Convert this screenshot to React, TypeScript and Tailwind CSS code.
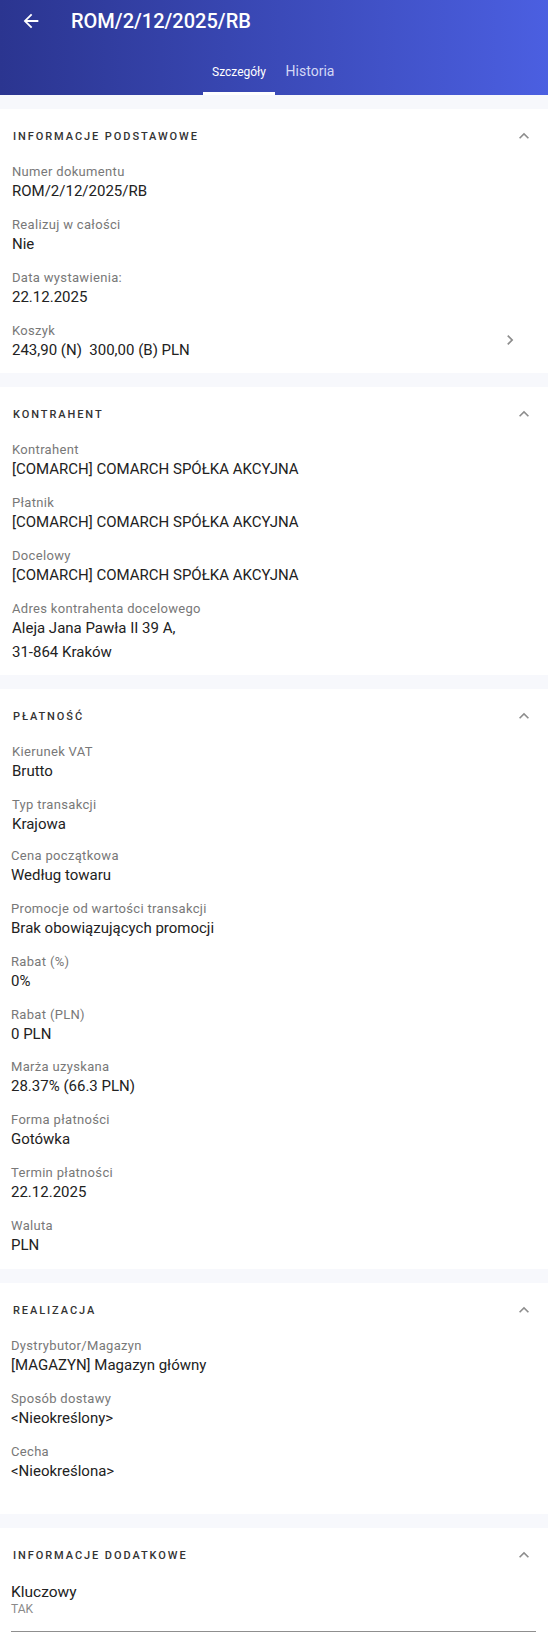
import React from "react";

const ArrowBack = () => (
  <svg width="22" height="22" viewBox="0 0 24 24" fill="white">
    <path d="M20 11H7.83l5.59-5.59L12 4l-8 8 8 8 1.41-1.41L7.83 13H20v-2z" />
  </svg>
);

const ExpandLess = () => (
  <svg width="20" height="20" viewBox="0 0 24 24" fill="#8d8d8d">
    <path d="M12 8l-6 6 1.41 1.41L12 10.83l4.59 4.58L18 14z" />
  </svg>
);

const ChevronRight = () => (
  <svg width="20" height="20" viewBox="0 0 24 24" fill="#8d8d8d">
    <path d="M10 6L8.59 7.41 13.17 12l-4.58 4.59L10 18l6-6z" />
  </svg>
);

function Section({
  title,
  children,
  pb,
}: {
  title: string;
  children: React.ReactNode;
  pb: string;
}) {
  return (
    <section className={`bg-white ${pb}`}>
      <div className="h-[55px] pb-[1px] flex items-center justify-between pl-[13px] pr-[14px]">
        <h2 className="text-[11px] font-medium tracking-[0.175em] text-[#333333] leading-none">
          {title}
        </h2>
        <ExpandLess />
      </div>
      {children}
    </section>
  );
}

function Field({
  label,
  value,
  cls = "",
}: {
  label: string;
  value: React.ReactNode;
  cls?: string;
}) {
  return (
    <div className={cls}>
      <div className="text-[13px] leading-[15px] text-[#787878] tracking-[0.025em]">{label}</div>
      <div className="text-[15px] leading-6 text-[#222222]">{value}</div>
    </div>
  );
}

export default function App() {
  return (
    <div className="font-[Roboto,sans-serif] bg-[#f7f8fc] w-[548px]">
      <header className="h-[95px] bg-gradient-to-r from-[#2b3590] to-[#4b5fe1] flex flex-col">
        <div className="h-[42px] flex items-center">
          <div className="w-[71px] pl-[20px] flex items-center">
            <ArrowBack />
          </div>
          <h1 className="text-[20px] font-medium text-white leading-none">ROM/2/12/2025/RB</h1>
        </div>
        <nav className="mt-auto flex justify-center">
          <div className="w-[72px] h-[53px] flex flex-col items-center">
            <span className="mt-auto mb-[14px] text-[12px] text-white leading-none">Szczegóły</span>
            <div className="w-full h-[3px] bg-white" />
          </div>
          <div className="w-[70px] h-[53px] flex flex-col items-center">
            <span className="mt-auto mb-[17px] text-[14px] text-[#d3d8f5] leading-none">Historia</span>
          </div>
        </nav>
      </header>

      <div className="flex flex-col gap-[14px] pt-[14px]">
        <Section title="INFORMACJE PODSTAWOWE" pb="pb-[11px]">
          <div className="flex flex-col gap-[14px] px-3">
            <Field label="Numer dokumentu" value="ROM/2/12/2025/RB" />
            <Field label="Realizuj w całości" value="Nie" />
            <Field label="Data wystawienia:" value="22.12.2025" />
            <div className="flex items-center justify-between pr-[16px]">
              <Field label="Koszyk" value="243,90 (N)  300,00 (B) PLN" cls="whitespace-pre" />
              <div className="mb-[6px]">
                <ChevronRight />
              </div>
            </div>
          </div>
        </Section>

        <Section title="KONTRAHENT" pb="pb-[11px]">
          <div className="flex flex-col gap-[14px] px-3">
            <Field label="Kontrahent" value="[COMARCH] COMARCH SPÓŁKA AKCYJNA" />
            <Field label="Płatnik" value="[COMARCH] COMARCH SPÓŁKA AKCYJNA" />
            <Field label="Docelowy" value="[COMARCH] COMARCH SPÓŁKA AKCYJNA" />
            <Field
              label="Adres kontrahenta docelowego"
              value={
                <>
                  <div>Aleja Jana Pawła II 39 A,</div>
                  <div>31-864 Kraków</div>
                </>
              }
            />
          </div>
        </Section>

        <Section title="PŁATNOŚĆ" pb="pb-[12px]">
          <div className="flex flex-col">
            <Field label="Kierunek VAT" value="Brutto" cls="pl-3" />
            <Field label="Typ transakcji" value="Krajowa" cls="pl-3 mt-[14px]" />
            <Field label="Cena początkowa" value="Według towaru" cls="pl-[11px] mt-[12px]" />
            <Field label="Promocje od wartości transakcji" value="Brak obowiązujących promocji" cls="pl-[11px] mt-[14px]" />
            <Field label="Rabat (%)" value="0%" cls="pl-[11px] mt-[14px]" />
            <Field label="Rabat (PLN)" value="0 PLN" cls="pl-[11px] mt-[14px]" />
            <Field label="Marża uzyskana" value="28.37% (66.3 PLN)" cls="pl-[11px] mt-[13px]" />
            <Field label="Forma płatności" value="Gotówka" cls="pl-[11px] mt-[14px]" />
            <Field label="Termin płatności" value="22.12.2025" cls="pl-[11px] mt-[14px]" />
            <Field label="Waluta" value="PLN" cls="pl-[11px] mt-[14px]" />
          </div>
        </Section>

        <Section title="REALIZACJA" pb="pb-[31px]">
          <div className="flex flex-col gap-[14px] pl-[11px]">
            <Field label="Dystrybutor/Magazyn" value="[MAGAZYN] Magazyn główny" />
            <Field label="Sposób dostawy" value="<Nieokreślony>" />
            <Field label="Cecha" value="<Nieokreślona>" />
          </div>
        </Section>

        <Section title="INFORMACJE DODATKOWE" pb="pb-[12px]">
          <div className="ml-[11px] mr-[12px]">
            <div className="text-[15.5px] leading-[18px] text-[#222222]">Kluczowy</div>
            <div className="text-[12px] leading-4 text-[#8a8a8a]">TAK</div>
            <div className="mt-[14px] h-px bg-[#8f8f8f]" />
          </div>
        </Section>
      </div>
    </div>
  );
}
